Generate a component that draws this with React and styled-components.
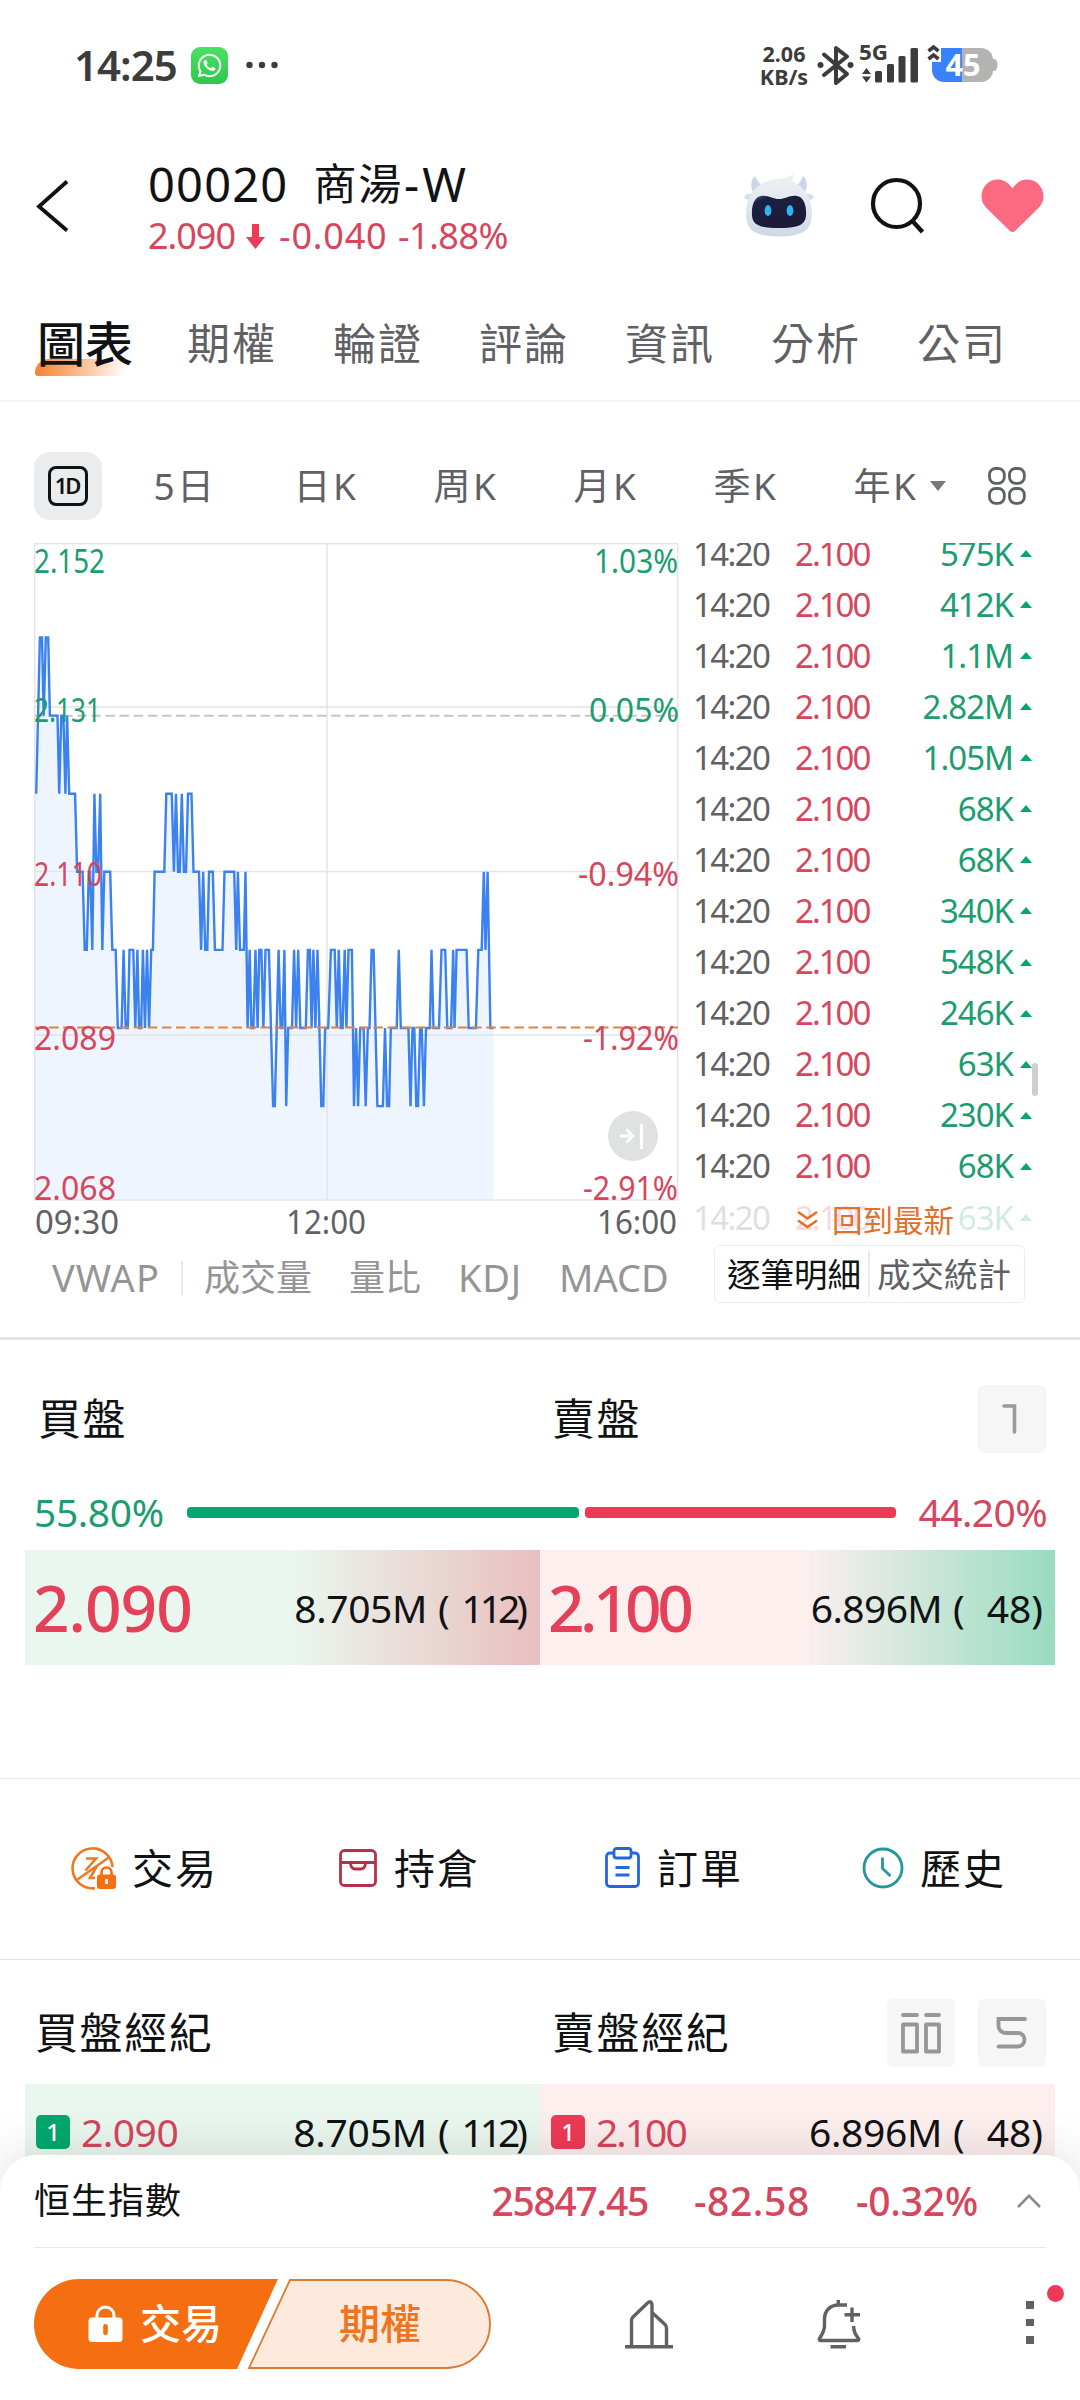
import React from "react";
import styled, { createGlobalStyle } from "styled-components";
import { FaWhatsapp } from "react-icons/fa";

const colors = {
  ink: "#111213",
  gray: "#5f6165",
  muted: "#959595",
  up: "#1b9d6f",
  upSolid: "#04a76f",
  down: "#d6465c",
  downSolid: "#ee3a56",
  orange: "#f56f12",
  line: "#e8e9e9",
};

const GlobalStyle = createGlobalStyle`
  * {
    box-sizing: border-box;
  }

  body {
    margin: 0;
    background: #fff;
    font-family: "Noto Sans", "Noto Sans CJK TC", sans-serif;
    color: ${colors.ink};
  }

  svg {
    display: block;
    flex: none;
  }
`;

const Screen = styled.div`
  position: relative;
  width: 1080px;
  height: 2400px;
  overflow: hidden;
  background: #fff;
`;

const Text = styled.span`
  font-size: ${(props) => props.$size}px;
  line-height: 1.2;
  letter-spacing: ${(props) => props.$track || 0}px;
  font-weight: ${(props) => props.$weight || 400};
  color: ${(props) => props.$color || colors.ink};
  white-space: pre;
`;

/* status bar */

const StatusBar = styled.div`
  display: flex;
  align-items: center;
  height: 130px;
  padding: 0 82px 0 74px;
`;

const AppBadge = styled.div`
  display: grid;
  place-items: center;
  width: 37px;
  height: 37px;
  margin: 0 18px 0 14px;
  border-radius: 9px;
  background: linear-gradient(#49e263, #2fc74c);
  color: #fff;
`;

const Speed = styled.div`
  display: flex;
  flex-direction: column;
  align-items: center;
  width: 48px;
  margin-left: auto;
  margin-right: 8px;
  font-size: 21.5px;
  font-weight: 700;
  line-height: 23.5px;
  color: #3c3c3c;
`;

/* stock header */

const Header = styled.header`
  display: flex;
  align-items: center;
  height: 152px;
  padding: 0 36px;
`;

const Title = styled.div`
  display: flex;
  flex-direction: column;
  margin: 8px auto 0 78px;
`;

const TitleRow = styled.div`
  display: flex;
  align-items: center;
  gap: ${(props) => props.$gap}px;
  height: 52px;
`;

const HeaderActions = styled.div`
  display: flex;
  align-items: center;
  gap: 55px;
`;

const Tabs = styled.nav`
  display: flex;
  align-items: center;
  gap: 56px;
  height: 120px;
  padding: 6px 0 0 37px;
  border-bottom: 2px solid #f5f5f5;
`;

const Tab = styled.div`
  position: relative;
  isolation: isolate;
  width: ${(props) => (props.$active ? 94 : 90)}px;
  font-size: ${(props) => (props.$active ? 48 : 43)}px;
  font-weight: ${(props) => (props.$active ? 500 : 400)};
  letter-spacing: ${(props) => (props.$active ? 0 : 2)}px;
  line-height: 60px;
  white-space: nowrap;
  color: ${(props) => (props.$active ? colors.ink : colors.gray)};
`;

const TabMark = styled.div`
  position: absolute;
  z-index: -1;
  left: -2px;
  top: 45px;
  width: 94px;
  height: 17px;
  border-radius: 14px 0 14px 3px;
  background: linear-gradient(100deg, #f77f2c 0%, #fbb787 45%, rgba(255, 255, 255, 0) 96%);
`;

const Periods = styled.div`
  display: flex;
  align-items: center;
  height: 68px;
  margin: 50px 54px 23px 34px;
`;

const PeriodChip = styled.div`
  display: grid;
  place-items: center;
  width: 68px;
  height: 68px;
  margin-right: 51.5px;
  border-radius: 16px;
  background: #ebecee;
`;

const PeriodBox = styled.div`
  width: 40px;
  height: 40px;
  border: 3px solid ${colors.ink};
  border-radius: 8px;
  font-size: 22px;
  font-weight: 600;
  letter-spacing: -2px;
  text-indent: -2px;
  line-height: 33px;
  text-align: center;
`;

const Period = styled.div`
  width: ${(props) => (props.$last ? 76 : 140)}px;
  font-size: 37px;
  letter-spacing: 2.4px;
  line-height: 50px;
  white-space: nowrap;
  color: ${colors.gray};
`;

/* chart and trade list */

const Market = styled.section`
  display: flex;
  height: 797px;
  padding-left: 34px;
  border-bottom: 3px solid #e1e4e2;
`;

const ChartColumn = styled.div`
  width: 646px;
`;

const Indicators = styled.div`
  display: flex;
  align-items: center;
  height: 74px;
  padding-left: 18px;
`;

const IndicatorGroup = styled.div`
  display: flex;
  align-items: center;
  gap: 37px;
`;

const VLine = styled.div`
  width: 2px;
  height: ${(props) => props.$height}px;
  margin: 0 ${(props) => props.$margin || 0}px;
  background: #e9eaea;
`;

const TradeColumn = styled.div`
  flex: 1;
`;

const TradeList = styled.div`
  position: relative;
  height: 692px;
  overflow: hidden;
`;

const Trades = styled.div`
  margin-top: -15px;
`;

const Trade = styled.div`
  display: grid;
  grid-template-columns: 102px 84px 1fr 12px;
  align-items: center;
  height: 51.07px;
  padding: 0 48px 0 13px;
`;

const Volume = styled(Text)`
  padding-right: 7px;
  text-align: right;
`;

const Triangle = styled.div`
  width: 0;
  height: 0;
  border-left: ${(props) => props.$w}px solid transparent;
  border-right: ${(props) => props.$w}px solid transparent;
  border-${(props) => (props.$down ? "top" : "bottom")}: ${(props) => props.$h}px solid
    ${(props) => props.$color};
`;

const BackToLatest = styled.div`
  position: absolute;
  left: 0;
  right: 0;
  bottom: 0;
  display: flex;
  align-items: center;
  gap: 14px;
  height: 50px;
  padding: 20px 0 0 117px;
  background: rgba(255, 255, 255, 0.8);
`;

const ScrollThumb = styled.div`
  position: absolute;
  left: 352px;
  top: 520px;
  width: 6px;
  height: 33px;
  border-radius: 3px;
  background: #cfcfcf;
`;

const Segmented = styled.div`
  display: flex;
  align-items: center;
  justify-content: space-between;
  width: 311px;
  height: 58px;
  margin: 10px 0 0 34px;
  padding: 0 13px 0 12px;
  border: 1.5px solid #ebecec;
  border-radius: 6px;
`;

/* order book */

const BookHeader = styled.div`
  display: flex;
  align-items: center;
  height: 68px;
  margin: ${(props) => props.$top}px 34px 0 ${(props) => props.$left}px;
`;

const BookTitle = styled.div`
  width: ${(props) => props.$width}px;
  font-size: 43px;
  letter-spacing: 1.6px;
  line-height: 60px;
  white-space: nowrap;
`;

const Spacer = styled.div`
  flex: 1;
`;

const IconChip = styled.div`
  display: grid;
  place-items: center;
  width: 68px;
  height: 68px;
  margin-left: 23px;
  border-radius: 6px;
  background: #f6f6f6;
`;

const Ratio = styled.div`
  display: flex;
  align-items: center;
  justify-content: space-between;
  height: 60px;
  margin: 29px 33px 8px 34px;
`;

const RatioBars = styled.div`
  display: flex;
  gap: 6px;
  width: 709px;
`;

const RatioBar = styled.div`
  height: 11px;
  border-radius: 4px;
  background: ${(props) => props.$color};
`;

const Quotes = styled.div`
  display: grid;
  grid-template-columns: 1fr 1fr;
  margin: ${(props) => props.$top || 0}px 25px 0;
`;

const Quote = styled.div`
  display: flex;
  align-items: center;
  justify-content: space-between;
  height: ${(props) => props.$height}px;
  padding: 1px 12px 0 8px;
  background: ${(props) => props.$bg};
`;

const Lots = styled.div`
  display: flex;
  align-items: center;
`;

const LotCount = styled(Text)`
  margin-right: ${(props) => -props.$track}px;
`;

const RankBadge = styled.div`
  width: 34px;
  height: 34px;
  margin: 0 11px 0 3px;
  border-radius: 5px;
  background: ${(props) => props.$color};
  color: #fff;
  font-size: 24px;
  font-weight: 500;
  line-height: 34px;
  text-align: center;
`;

const PriceGroup = styled.div`
  display: flex;
  align-items: center;
`;

/* shortcuts */

const Shortcuts = styled.div`
  display: flex;
  height: 182px;
  margin-top: 113px;
  padding: 0 0 3px 71px;
  border-top: 1px solid ${colors.line};
  border-bottom: 1px solid #dfe0e0;
`;

const Shortcut = styled.div`
  display: flex;
  align-items: center;
  gap: ${(props) => props.$gap}px;
  width: ${(props) => props.$width}px;
  font-size: 41px;
  letter-spacing: 2px;
  line-height: 50px;
  white-space: nowrap;
`;

/* bottom sheet */

const BottomSheet = styled.footer`
  position: absolute;
  left: 0;
  right: 0;
  bottom: 0;
  height: 245px;
  border-radius: 36px 36px 0 0;
  background: #fff;
  box-shadow: 0 -4px 50px rgba(0, 0, 0, 0.12);
`;

const IndexRow = styled.div`
  display: flex;
  align-items: center;
  height: 93px;
  margin: 0 34px;
  padding-right: 5px;
  border-bottom: 1px solid #e6e7e7;
`;

const IndexValue = styled(Text)`
  margin-right: ${(props) => props.$gap}px;
`;

const ActionBar = styled.div`
  display: flex;
  align-items: center;
  height: 90px;
  margin: 31px 0 0 34px;
`;

const TradeButton = styled.div`
  display: flex;
  align-items: center;
  gap: 17px;
  width: 244px;
  height: 90px;
  padding-left: 54px;
  border-radius: 45px 0 0 45px;
  background: ${colors.orange};
  clip-path: polygon(0 0, 100% 0, 203px 100%, 0 100%);
`;

const OptionButton = styled.div`
  display: grid;
  place-items: center;
  width: 245px;
  height: 90px;
  margin-left: -31px;

  > * {
    grid-area: 1 / 1;
  }

  > span {
    margin-left: 21px;
  }
`;

const Actions = styled.div`
  display: flex;
  align-items: center;
  margin-left: 133px;
`;

const BellButton = styled.div`
  margin: 0 165px 0 144px;
`;

const MoreButton = styled.div`
  position: relative;
  display: flex;
  flex-direction: column;
  gap: 10px;
  margin-bottom: 3px;

  i {
    width: 8px;
    height: 7.5px;
    background: ${colors.gray};
  }
`;

const NoticeDot = styled.div`
  position: absolute;
  left: 21px;
  top: -16px;
  width: 17px;
  height: 17px;
  border-radius: 50%;
  background: ${colors.downSolid};
`;

/* data */

const PERIODS = ["5日", "日K", "周K", "月K", "季K", "年K"];
const TABS = ["圖表", "期權", "輪證", "評論", "資訊", "分析", "公司"];
const VOLUMES = [
  "575K",
  "412K",
  "1.1M",
  "2.82M",
  "1.05M",
  "68K",
  "68K",
  "340K",
  "548K",
  "246K",
  "63K",
  "230K",
  "68K",
  "63K",
];

// [position, price step], step 0 is 2.140 and every step is one cent lower
const PRICES = [
  [105, 2], [116, 0], [122, 0], [127, 1], [133, 0], [140, 0], [145, 1], [167, 1],
  [172, 2], [178, 1], [184, 1], [190, 2], [195, 1], [201, 2], [218, 2], [224, 3],
  [240, 3], [246, 4], [252, 4], [258, 3], [262, 3], [268, 4], [274, 2], [280, 3],
  [285, 3], [291, 2], [297, 4], [303, 3], [320, 3], [326, 4], [336, 4], [342, 5],
  [353, 5], [359, 4], [365, 5], [371, 5], [376, 4], [387, 4], [393, 5], [399, 4],
  [404, 5], [410, 5], [415, 4], [421, 5], [427, 4], [433, 5], [439, 4], [444, 4],
  [449, 3], [477, 3], [483, 2], [499, 2], [505, 3], [511, 2], [517, 3], [522, 3],
  [528, 2], [534, 3], [540, 3], [546, 2], [556, 2], [562, 3], [578, 3], [584, 4],
  [590, 3], [596, 4], [602, 4], [607, 3], [618, 3], [624, 4], [646, 4], [652, 3],
  [680, 3], [686, 4], [691, 3], [697, 4], [708, 4], [713, 3], [719, 5], [725, 4],
  [730, 5], [736, 5], [742, 4], [748, 5], [753, 4], [759, 4], [765, 5], [771, 4],
  [781, 4], [793, 6], [798, 6], [809, 4], [815, 5], [820, 5], [826, 4], [831, 6],
  [837, 5], [848, 5], [854, 4], [860, 5], [866, 4], [872, 5], [888, 5], [894, 4],
  [900, 4], [905, 5], [910, 4], [916, 5], [922, 4], [933, 6], [939, 6], [944, 5],
  [953, 5], [961, 4], [972, 4], [978, 5], [984, 4], [990, 5], [995, 5], [1001, 4],
  [1006, 5], [1012, 4], [1022, 4], [1028, 6], [1034, 5], [1040, 6], [1046, 5],
  [1056, 5], [1062, 6], [1068, 5], [1073, 5], [1079, 4], [1085, 4], [1096, 6],
  [1112, 6], [1118, 5], [1124, 6], [1130, 6], [1135, 5], [1152, 5], [1158, 4],
  [1164, 5], [1186, 5], [1192, 6], [1198, 5], [1203, 5], [1209, 6], [1214, 6],
  [1220, 5], [1225, 5], [1231, 6], [1237, 5], [1248, 5], [1253, 4], [1259, 5],
  [1275, 5], [1282, 4], [1293, 4], [1299, 5], [1310, 5], [1316, 4], [1320, 5],
  [1326, 4], [1355, 4], [1361, 5], [1382, 5], [1389, 4], [1399, 4], [1405, 3],
  [1410, 4], [1416, 3], [1424, 5], [1433, 5],
];

// [text, x, baseline, width, color]
const CHART_LABELS = [
  ["2.152", 34, 572.5, 71, colors.up],
  ["2.131", 34, 722, 67, colors.up],
  ["2.110", 34, 886, 68, colors.down],
  ["2.089", 34, 1050, 82, colors.down],
  ["2.068", 34, 1199.5, 82, colors.down],
  ["1.03%", 594, 572.5, 84, colors.up],
  ["0.05%", 589, 722, 90, colors.up],
  ["-0.94%", 578, 886, 101, colors.down],
  ["-1.92%", 583, 1050, 96, colors.down],
  ["-2.91%", 583, 1199.5, 95, colors.down],
  ["09:30", 35, 1233.5, 84, colors.gray],
  ["12:00", 286, 1233.5, 80, colors.gray],
  ["16:00", 597, 1233.5, 80, colors.gray],
];

const PriceChart = () => {
  const points = PRICES.map(
    ([x, step]) => `${(x / 2.904).toFixed(1)},${(637.5 + step * 78.1).toFixed(1)}`
  ).join(" ");

  return (
    <svg width="646" height="698" viewBox="34 543 646 698">
      <polygon points={`35,1199 35,794 ${points} 493.5,1199`} fill="#eef5ff" />
      <g stroke="#e2e4e5" strokeWidth="1.4" fill="none">
        <rect x="34.7" y="543.7" width="643" height="656.3" />
        <path d="M35 707H678M35 871.5H678M35 1035H678M327 544V1200" />
      </g>
      <path d="M35 715.7H678" stroke="#c6c6c6" strokeWidth="2" strokeDasharray="9.5 4.6" />
      <polyline points={points} fill="none" stroke="#3b82ee" strokeWidth="2.4" />
      <path d="M35 1027.5H678" stroke="#e0843f" strokeWidth="2.2" strokeDasharray="9.5 4.6" />
      {CHART_LABELS.map(([label, x, y, width, color]) => (
        <text
          key={label}
          x={x}
          y={y}
          fontSize="33"
          fill={color}
          textLength={width}
          lengthAdjust="spacingAndGlyphs"
        >
          {label}
        </text>
      ))}
      <circle cx="633" cy="1136" r="25" fill="#dfe2e1" />
      <path
        d="M620 1136h12M626.500 1129.500l6.500 6.500l-6.500 6.500M641.500 1124v25"
        stroke="#fff"
        strokeWidth="2.8"
        fill="none"
      />
    </svg>
  );
};

const StatusIcons = () => (
  <svg width="182" height="44" viewBox="817 43 182 44">
    <g fill="none" stroke="#3c3c3c" strokeWidth="4" strokeLinejoin="round" strokeLinecap="round">
      <path d="M825 54.500L848 74L837 83V48L848 56.500L825 75" />
    </g>
    <circle cx="821.500" cy="65" r="3" fill="#3c3c3c" />
    <circle cx="851.500" cy="65" r="3" fill="#3c3c3c" />
    <text
      x="860"
      y="59.500"
      fontSize="21"
      fontWeight="700"
      fill="#3c3c3c"
      textLength="29"
      lengthAdjust="spacingAndGlyphs"
    >
      5G
    </text>
    <path d="M867.500 68l4.500 6h-9zM867.500 82.500l4.500-6h-9z" fill="#3c3c3c" />
    <g fill="#3c3c3c">
      <rect x="876" y="71" width="7" height="11.500" rx="1.500" />
      <rect x="888" y="64" width="7" height="18.500" rx="1.500" />
      <rect x="899.500" y="56" width="7" height="26.500" rx="1.500" />
      <rect x="911.500" y="48" width="7.500" height="34.500" rx="1.500" />
    </g>
    <path d="M963 48h19a12 12 0 0 1 12 12v10a12 12 0 0 1-12 12h-19z" fill="#b3b3b3" />
    <path d="M994 59h1.500q3 1 3 6t-3 6H994z" fill="#b3b3b3" />
    <path d="M942 48h21v34h-18a12 12 0 0 1-12-12V62h9z" fill="#3a82fb" />
    <path
      d="M929.500 51l5-4 5 4M929.500 59l5-4 5 4"
      fill="none"
      stroke="#3c3c3c"
      strokeWidth="3.600"
    />
    <text
      x="946.500"
      y="76"
      fontSize="30"
      fontWeight="700"
      fill="#fff"
      textLength="35"
      lengthAdjust="spacingAndGlyphs"
    >
      45
    </text>
  </svg>
);

const BackIcon = () => (
  <svg width="34" height="54" viewBox="0 0 34 54">
    <path d="M31 2.500L3 27.500L31 51.500" fill="none" stroke={colors.ink} strokeWidth="3.800" />
  </svg>
);

const RobotIcon = () => (
  <svg width="72" height="64" viewBox="0 0 72 64">
    <defs>
      <linearGradient id="shell" x1="0" y1="0" x2="0" y2="1">
        <stop offset="0" stopColor="#eef0f4" />
        <stop offset="0.6" stopColor="#dfe4ee" />
        <stop offset="1" stopColor="#cfd8e6" />
      </linearGradient>
      <linearGradient id="visor" x1="0" y1="0" x2="0.5" y2="0.6">
        <stop offset="0" stopColor="#3f6fae" />
        <stop offset="0.28" stopColor="#1b2145" />
        <stop offset="1" stopColor="#1c1c3a" />
      </linearGradient>
    </defs>
    <path d="M10 18C7 12 8 5 12 2c2 4 4 8 8 9zM62 18c3-6 2-13-2-16-2 4-3 8-7 9z" fill="#c9d6e8" />
    <path d="M9 20c-4-1-6 0-8 3 2 3 5 3 8 3zM63 20c4-1 6 0 8 3-2 3-5 3-8 3z" fill="#d3deec" />
    <path
      d="M32 5.500c7-.5 14-2 18-5.500 1 3 0 5-1 7 12 5 20 17 20 33 0 16-9 22.500-33 22.500S3 56 3 40C3 20 15 7 32 5.500z"
      fill="url(#shell)"
    />
    <path
      d="M15 23c8-4 14 2 21 2s13-6 21-2c5 3 6.500 11 6 19-1 10-10 12-27 12S10 52 9 42c-.5-8 1-16 6-19z"
      fill="url(#visor)"
    />
    <ellipse cx="25" cy="36.500" rx="3.400" ry="5.400" fill="#2cb4f7" />
    <ellipse cx="47" cy="36.500" rx="3.400" ry="5.400" fill="#2cb4f7" />
  </svg>
);

const SearchIcon = () => (
  <svg width="56" height="58" viewBox="0 0 56 58">
    <circle cx="26.500" cy="26.500" r="23.500" fill="none" stroke={colors.ink} strokeWidth="4.200" />
    <path d="M41.500 43L52.500 55" stroke={colors.ink} strokeWidth="4.400" />
  </svg>
);

const HeartIcon = () => (
  <svg width="63" height="54" viewBox="0 0 63 54">
    <path
      d="M31.500 9.500C27 3 22 .5 17 .5C7.500 .5 .5 8 .5 17.500c0 6 3 9.500 7 13.500l21.500 21c1.500 1.500 3.500 1.500 5 0L55.500 31c4-4 7-7.500 7-13.500C62.500 8 55.500 .5 46 .5c-5 0-10 2.500-14.500 9z"
      fill="#fb6a80"
    />
  </svg>
);

const GridIcon = () => (
  <svg width="38" height="38" viewBox="0 0 38 38">
    <g fill="none" stroke={colors.gray} strokeWidth="2.800">
      <rect x="1.500" y="1.500" width="14.800" height="14.800" rx="6" />
      <rect x="21.500" y="1.500" width="14.800" height="14.800" rx="6" />
      <rect x="1.500" y="21.500" width="14.800" height="14.800" rx="6" />
      <rect x="21.500" y="21.500" width="14.800" height="14.800" rx="6" />
    </g>
  </svg>
);

const DoubleDownIcon = () => (
  <svg width="21" height="20" viewBox="0 0 21 20">
    <path
      d="M1 2l9.500 6.500L20 2M1 10.500L10.500 17 20 10.500"
      fill="none"
      stroke="#e3702a"
      strokeWidth="2.600"
    />
  </svg>
);

const LevelOneIcon = () => (
  <svg width="30" height="32" viewBox="0 0 30 32">
    <path d="M7 3h10.500v26" fill="none" stroke="#9a9a9a" strokeWidth="3.600" strokeLinecap="round" />
  </svg>
);

const ColumnsIcon = () => (
  <svg width="40" height="42" viewBox="0 0 40 42">
    <g fill="none" stroke="#979797" strokeWidth="3.800" strokeLinecap="round" strokeLinejoin="round">
      <path d="M2 3h14M25 3h13" />
      <rect x="2" y="12.500" width="14" height="27" />
      <rect x="25" y="12.500" width="13" height="27" />
    </g>
  </svg>
);

const SnakeIcon = () => (
  <svg width="32" height="32" viewBox="0 0 32 32">
    <path
      d="M29 2H2.500v7a7 7 0 0 0 7 7H22a6.500 6.500 0 0 1 6.500 6.500v.5a6.500 6.500 0 0 1-6.500 6.500H2.500"
      fill="none"
      stroke="#979797"
      strokeWidth="3.800"
      strokeLinecap="round"
    />
  </svg>
);

const TradeIcon = () => (
  <svg width="46" height="44" viewBox="0 0 46 44">
    <g fill="none" stroke="#ec7a25" strokeWidth="2.600">
      <path d="M41.500 21A20 20 0 1 0 24 42.200" />
      <path d="M6.500 33.500L38.500 11M15 12.500h10L14.500 24.500M24 32h-5l7-12" />
    </g>
    <rect x="26" y="28.500" width="19" height="14.500" rx="3" fill="#f56f12" />
    <path d="M30.500 29v-2.500a5 5 0 0 1 10 0V29" fill="none" stroke="#f56f12" strokeWidth="2.600" />
    <rect x="34.200" y="33" width="2.800" height="5" fill="#fff" />
  </svg>
);

const HoldingIcon = () => (
  <svg width="38" height="38" viewBox="0 0 38 38">
    <g fill="none" stroke="#b92f49" strokeWidth="2.800">
      <rect x="1.500" y="1.500" width="35" height="35" rx="4" />
      <path d="M1.500 13.500H36.500M11.500 13.500c0 5 2 6.500 5 6.500h5c3 0 5-1.500 5-6.500" />
    </g>
  </svg>
);

const OrderIcon = () => (
  <svg width="35" height="41" viewBox="0 0 35 41">
    <g fill="none" stroke="#2466e0" strokeWidth="2.800">
      <path d="M9 6H5a3.500 3.500 0 0 0-3.500 3.500V36A3.500 3.500 0 0 0 5 39.500h25a3.500 3.500 0 0 0 3.500-3.500V9.500A3.500 3.500 0 0 0 30 6h-4" />
      <rect x="9" y="1.500" width="17" height="9.500" rx="2.500" />
      <path d="M10.500 20.500H24.500M10.500 28H24.500" />
    </g>
  </svg>
);

const HistoryIcon = () => (
  <svg width="42" height="42" viewBox="0 0 42 42">
    <g fill="none" stroke="#26969b" strokeWidth="2.800">
      <circle cx="21" cy="21" r="19" />
      <path d="M20.500 10.500V21.500L28.500 29" />
    </g>
  </svg>
);

const LockIcon = () => (
  <svg width="35" height="38" viewBox="0 0 35 38">
    <path d="M9 15v-4.500a8.500 8.500 0 0 1 17 0V15" fill="none" stroke="#fff" strokeWidth="3" />
    <path
      d="M4 12.500h27a3.500 3.500 0 0 1 3.500 3.500v17.500A3.500 3.500 0 0 1 31 37H4a3.500 3.500 0 0 1-3.500-3.500V16A3.500 3.500 0 0 1 4 12.500z"
      fill="#fff"
    />
    <rect x="15.200" y="19" width="4.600" height="11" rx="2" fill={colors.orange} />
  </svg>
);

const OptionShape = () => (
  <svg width="245" height="90" viewBox="0 0 245 90">
    <path d="M43 1H199a44 44 0 0 1 0 88H2z" fill="#fdeadd" stroke="#dc7a33" strokeWidth="1.800" />
  </svg>
);

const BuildingIcon = () => (
  <svg width="48" height="49" viewBox="0 0 48 49">
    <g fill="none" stroke={colors.gray} strokeWidth="3.400">
      <path d="M0 46.800H48M6.500 46V20.500q0-2 1.500-3.500L22 3.500q4.500-4 5 1.500V46M27 12.500L40 24.500q1.500 1.500 1.500 3.500V46" />
    </g>
  </svg>
);

const BellIcon = () => (
  <svg width="44" height="49" viewBox="0 0 44 49">
    <g fill="none" stroke={colors.gray} strokeWidth="3.400">
      <path d="M30 5H21.500C13 5 7.500 11 7.500 19v7c0 5-2 8-5 12.500q-1 2 1.500 2h36q2.500 0 1.500-2c-3-4-4.500-6-5-12.500M21.300 0v5M13.500 46.800h15.500M35 7.500V22M27.500 14.800h15.500" />
    </g>
  </svg>
);

const CaretUpIcon = () => (
  <svg width="24" height="14" viewBox="0 0 24 14">
    <path d="M1 13L12 1.800 23 13" fill="none" stroke="#8b8b8b" strokeWidth="2.600" />
  </svg>
);

const ArrowDownIcon = () => (
  <svg width="23" height="25" viewBox="0 0 23 25">
    <path d="M6 0h7v13h6L9.500 25 0 13h6z" fill={colors.downSolid} />
  </svg>
);

const App = () => {
  return (
    <Screen>
      <GlobalStyle />

      <StatusBar>
        <Text $size={42} $weight={600} $track={-1} $color="#3c3c3c">
          14:25
        </Text>
        <AppBadge>
          <FaWhatsapp size={27} />
        </AppBadge>
        <svg width="32" height="8" viewBox="0 0 32 8">
          <g fill="#3c3c3c">
            <circle cx="3.500" cy="4" r="3.200" />
            <circle cx="16" cy="4" r="3.200" />
            <circle cx="28.500" cy="4" r="3.200" />
          </g>
        </svg>
        <Speed>
          <span>2.06</span>
          <span>KB/s</span>
        </Speed>
        <StatusIcons />
      </StatusBar>

      <Header>
        <BackIcon />
        <Title>
          <TitleRow $gap={25}>
            <Text $size={47} $track={1.2}>
              00020
            </Text>
            <TitleRow $gap={1}>
              <Text $size={43} $track={1.8}>
                商湯
              </Text>
              <Text $size={47} $track={3}>
                -W
              </Text>
            </TitleRow>
          </TitleRow>
          <TitleRow $gap={10.5}>
            <Text $size={36} $track={-1} $color={colors.down}>
              2.090
            </Text>
            <ArrowDownIcon />
            <Text $size={36} $track={0.8} $color={colors.down}>
              -0.040
            </Text>
            <Text $size={36} $track={-0.5} $color={colors.down}>
              -1.88%
            </Text>
          </TitleRow>
        </Title>
        <HeaderActions>
          <RobotIcon />
          <SearchIcon />
          <HeartIcon />
        </HeaderActions>
      </Header>

      <Tabs>
        {TABS.map((tab, i) => (
          <Tab key={tab} $active={i === 0}>
            {i === 0 && <TabMark />}
            {tab}
          </Tab>
        ))}
      </Tabs>

      <Periods>
        <PeriodChip>
          <PeriodBox>1D</PeriodBox>
        </PeriodChip>
        {PERIODS.map((period, i) => (
          <Period key={period} $last={i === PERIODS.length - 1}>
            {period}
          </Period>
        ))}
        <Triangle $down $w={8} $h={10} $color="#77797c" />
        <Spacer />
        <GridIcon />
      </Periods>

      <Market>
        <ChartColumn>
          <PriceChart />
          <Indicators>
            <Text $size={38} $track={1} $color={colors.muted}>
              VWAP
            </Text>
            <VLine $height={34} $margin={21} />
            <IndicatorGroup>
              <Text $size={36} $color={colors.muted}>
                成交量
              </Text>
              <Text $size={36} $color={colors.muted}>
                量比
              </Text>
              <Text $size={38} $track={0.8} $color={colors.muted}>
                KDJ
              </Text>
              <Text $size={38} $color={colors.muted}>
                MACD
              </Text>
            </IndicatorGroup>
          </Indicators>
        </ChartColumn>

        <TradeColumn>
          <TradeList>
            <Trades>
              {VOLUMES.map((volume, i) => (
                <Trade key={i}>
                  <Text $size={33} $track={-1.6} $color={colors.gray}>
                    14:20
                  </Text>
                  <Text $size={33} $track={-2} $color={colors.down}>
                    2.100
                  </Text>
                  <Volume $size={33} $track={-1} $color={colors.up}>
                    {volume}
                  </Volume>
                  <Triangle $w={6} $h={7} $color={colors.upSolid} />
                </Trade>
              ))}
            </Trades>
            <BackToLatest>
              <DoubleDownIcon />
              <Text $size={30.5} $color="#e3702a">
                回到最新
              </Text>
            </BackToLatest>
            <ScrollThumb />
          </TradeList>
          <Segmented>
            <Text $size={33.5}>逐筆明細</Text>
            <VLine $height={46} />
            <Text $size={33.5} $color={colors.gray}>
              成交統計
            </Text>
          </Segmented>
        </TradeColumn>
      </Market>

      <BookHeader $top={45} $left={38}>
        <BookTitle $width={514}>買盤</BookTitle>
        <BookTitle $width={200}>賣盤</BookTitle>
        <Spacer />
        <IconChip>
          <LevelOneIcon />
        </IconChip>
      </BookHeader>

      <Ratio>
        <Text $size={39} $track={-0.4} $color={colors.up}>
          55.80%
        </Text>
        <RatioBars>
          <RatioBar $color={colors.upSolid} style={{ width: "55.8%" }} />
          <RatioBar $color={colors.downSolid} style={{ width: "44.2%" }} />
        </RatioBars>
        <Text $size={39} $track={-0.6} $color={colors.down}>
          44.20%
        </Text>
      </Ratio>

      <Quotes>
        <Quote $height={115} $bg="linear-gradient(90deg, #eaf7ee 51%, #e9bfc0)">
          <Text $size={64} $weight={500} $track={-1} $color="#e54059">
            2.090
          </Text>
          <Lots>
            <Text $size={39} $track={-0.4}>
              8.705M
            </Text>
            <Text $size={39} $track={0.8}>
              {" ( "}
            </Text>
            <LotCount $size={39} $track={-4}>
              112)
            </LotCount>
          </Lots>
        </Quote>
        <Quote $height={115} $bg="linear-gradient(90deg, #feefef 51%, #98dcc0)">
          <Text $size={64} $weight={500} $track={-4.5} $color="#e54059">
            2.100
          </Text>
          <Lots>
            <Text $size={39} $track={-0.6}>
              6.896M
            </Text>
            <Text $size={39} $track={0.6}>
              {" (  "}
            </Text>
            <LotCount $size={39}>48)</LotCount>
          </Lots>
        </Quote>
      </Quotes>

      <Shortcuts>
        <Shortcut $width={268} $gap={15}>
          <TradeIcon />
          交易
        </Shortcut>
        <Shortcut $width={266} $gap={17}>
          <HoldingIcon />
          持倉
        </Shortcut>
        <Shortcut $width={257} $gap={17}>
          <OrderIcon />
          訂單
        </Shortcut>
        <Shortcut $width={160} $gap={16}>
          <HistoryIcon />
          歷史
        </Shortcut>
      </Shortcuts>

      <BookHeader $top={39} $left={35}>
        <BookTitle $width={517}>買盤經紀</BookTitle>
        <BookTitle $width={200}>賣盤經紀</BookTitle>
        <Spacer />
        <IconChip>
          <ColumnsIcon />
        </IconChip>
        <IconChip>
          <SnakeIcon />
        </IconChip>
      </BookHeader>

      <Quotes $top={17}>
        <Quote $height={96} $bg="#eaf7ee">
          <PriceGroup>
            <RankBadge $color={colors.upSolid}>1</RankBadge>
            <Text $size={39} $track={-0.5} $color={colors.down}>
              2.090
            </Text>
          </PriceGroup>
          <Lots>
            <Text $size={39} $track={-0.2}>
              8.705M
            </Text>
            <Text $size={39} $track={0.8}>
              {" ( "}
            </Text>
            <LotCount $size={39} $track={-4}>
              112)
            </LotCount>
          </Lots>
        </Quote>
        <Quote $height={96} $bg="#feefef">
          <PriceGroup>
            <RankBadge $color={colors.downSolid}>1</RankBadge>
            <Text $size={39} $track={-2} $color={colors.down}>
              2.100
            </Text>
          </PriceGroup>
          <Lots>
            <Text $size={39} $track={-0.3}>
              6.896M
            </Text>
            <Text $size={39} $track={0.6}>
              {" (  "}
            </Text>
            <LotCount $size={39}>48)</LotCount>
          </Lots>
        </Quote>
      </Quotes>

      <BottomSheet>
        <IndexRow>
          <Text $size={36} $track={1}>
            恒生指數
          </Text>
          <Spacer />
          <IndexValue $gap={46} $size={39} $weight={500} $track={-1.3} $color={colors.down}>
            25847.45
          </IndexValue>
          <IndexValue $gap={46} $size={39} $weight={500} $track={0.6} $color={colors.down}>
            -82.58
          </IndexValue>
          <IndexValue $gap={39} $size={39} $weight={500} $track={-0.2} $color={colors.down}>
            -0.32%
          </IndexValue>
          <CaretUpIcon />
        </IndexRow>
        <ActionBar>
          <TradeButton>
            <LockIcon />
            <Text $size={41} $weight={500} $color="#fff">
              交易
            </Text>
          </TradeButton>
          <OptionButton>
            <OptionShape />
            <Text $size={41} $weight={500} $color="#ee7420">
              期權
            </Text>
          </OptionButton>
          <Actions>
            <BuildingIcon />
            <BellButton>
              <BellIcon />
            </BellButton>
            <MoreButton>
              <i />
              <i />
              <i />
              <NoticeDot />
            </MoreButton>
          </Actions>
        </ActionBar>
      </BottomSheet>
    </Screen>
  );
};

export default App;
